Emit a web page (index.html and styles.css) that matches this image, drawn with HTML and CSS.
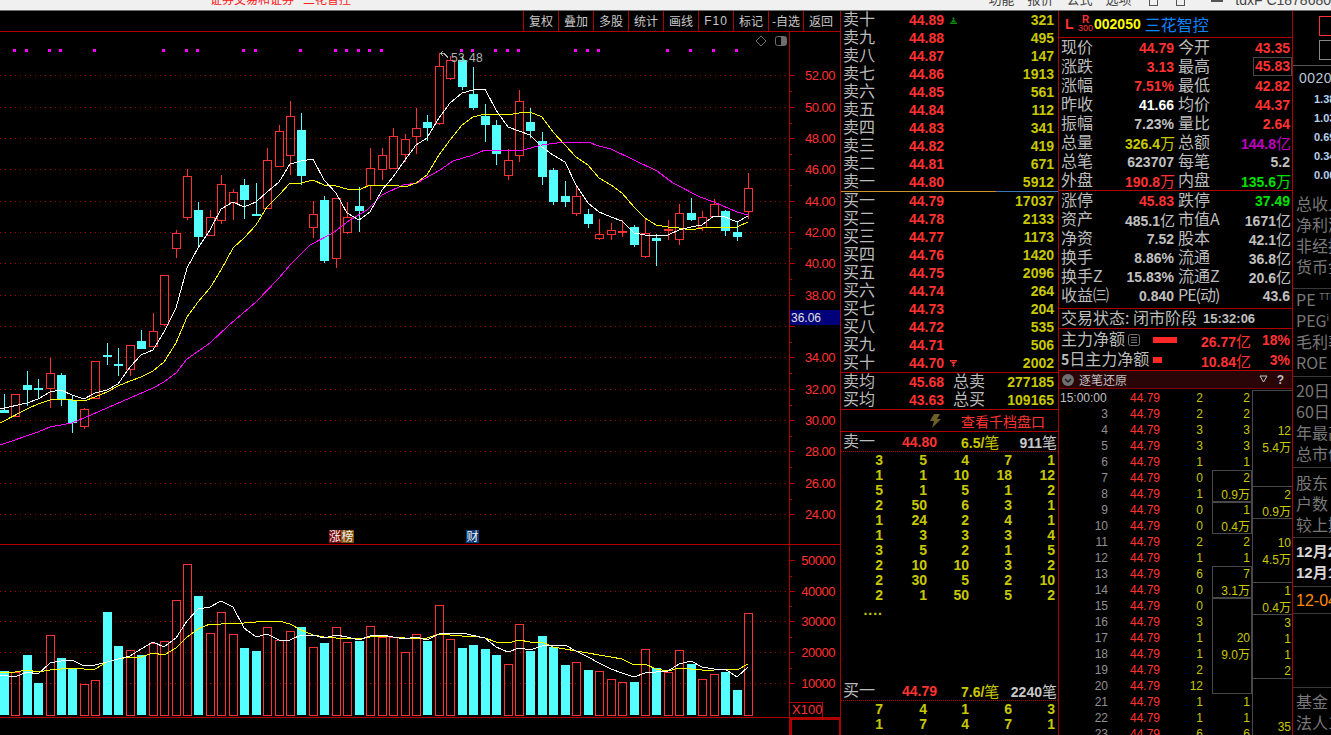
FILE: index.html
```html
<!DOCTYPE html>
<html lang="zh-CN">
<head>
<meta charset="utf-8">
<title>三花智控 002050</title>
<link rel="stylesheet" href="styles.css">
</head>
<body>
<header class="titlebar">
  <span class="title-red">证券交易和证券<span class="title-name">三花智控</span></span>
  <nav class="title-menu"><span>功能</span><span>报价</span><span>公式</span><span>选项</span></nav>
  <span class="title-icons"><i class="ti-a"></i><i class="ti-b"></i><i class="ti-c"></i></span>
  <span class="title-acct">tdxF C1878680</span>
</header>
<main class="app">
  <section class="chart-col">
    <div class="toolbar">
      <span class="tool">复权</span><span class="tool">叠加</span><span class="tool">多股</span><span class="tool">统计</span><span class="tool">画线</span><span class="tool tool-f">F10</span><span class="tool">标记</span><span class="tool">-自选</span><span class="tool">返回</span>
    </div>
    <svg id="chart" class="chart" viewBox="0 32 840 703" width="840" height="703" xmlns="http://www.w3.org/2000/svg"></svg>
  </section>

  <section class="book">
    <div class="ob-row"><span class="lb">卖十</span><b class="pr">44.89</b><svg class="arrow" viewBox="0 0 7 7"><path class="arr-g" d="M3.5 0 5 2H2zM3.5 2 6 5H1zM0 5.500h7V7H0z"/></svg><b class="vo">321</b></div>
    <div class="ob-row"><span class="lb">卖九</span><b class="pr">44.88</b><b class="vo">495</b></div>
    <div class="ob-row"><span class="lb">卖八</span><b class="pr">44.87</b><b class="vo">147</b></div>
    <div class="ob-row"><span class="lb">卖七</span><b class="pr">44.86</b><b class="vo">1913</b></div>
    <div class="ob-row"><span class="lb">卖六</span><b class="pr">44.85</b><b class="vo">561</b></div>
    <div class="ob-row"><span class="lb">卖五</span><b class="pr">44.84</b><b class="vo">112</b></div>
    <div class="ob-row"><span class="lb">卖四</span><b class="pr">44.83</b><b class="vo">341</b></div>
    <div class="ob-row"><span class="lb">卖三</span><b class="pr">44.82</b><b class="vo">419</b></div>
    <div class="ob-row"><span class="lb">卖二</span><b class="pr">44.81</b><b class="vo">671</b></div>
    <div class="ob-row"><span class="lb">卖一</span><b class="pr">44.80</b><b class="vo">5912</b></div>
    <div class="ratio"><i class="ratio-a"></i><i class="ratio-b"></i></div>
    <div class="ob-row"><span class="lb">买一</span><b class="pr">44.79</b><b class="vo">17037</b></div>
    <div class="ob-row"><span class="lb">买二</span><b class="pr">44.78</b><b class="vo">2133</b></div>
    <div class="ob-row"><span class="lb">买三</span><b class="pr">44.77</b><b class="vo">1173</b></div>
    <div class="ob-row"><span class="lb">买四</span><b class="pr">44.76</b><b class="vo">1420</b></div>
    <div class="ob-row"><span class="lb">买五</span><b class="pr">44.75</b><b class="vo">2096</b></div>
    <div class="ob-row"><span class="lb">买六</span><b class="pr">44.74</b><b class="vo">264</b></div>
    <div class="ob-row"><span class="lb">买七</span><b class="pr">44.73</b><b class="vo">204</b></div>
    <div class="ob-row"><span class="lb">买八</span><b class="pr">44.72</b><b class="vo">535</b></div>
    <div class="ob-row"><span class="lb">买九</span><b class="pr">44.71</b><b class="vo">506</b></div>
    <div class="ob-row"><span class="lb">买十</span><b class="pr">44.70</b><svg class="arrow" viewBox="0 0 7 7"><path class="arr-r" d="M0 0h7v1.500H0zM1 2h5L3.500 5zM2 5h3L3.500 7z"/></svg><b class="vo">2002</b></div>
    <div class="rule"></div>
    <div class="ob-row"><span class="lb">卖均</span><b class="pr">45.68</b><span class="lb lb-mid">总卖</span><b class="vo">277185</b></div>
    <div class="ob-row"><span class="lb">买均</span><b class="pr">43.63</b><span class="lb lb-mid">总买</span><b class="vo">109165</b></div>
    <div class="rule"></div>
    <div class="depth-link"><svg class="bolt" viewBox="0 0 12 14"><path d="M5 0h6L8 5h4L3 14l2-7H1z"/></svg><span>查看千档盘口</span></div>
    <div class="rule"></div>
    <div class="queue-head"><span class="lb">卖一</span><b class="pr q-p">44.80</b><b class="vo q-v">6.5/<span class="unit">笔</span></b><b class="q-n">911<span class="unit">笔</span></b></div>
    <div class="queue">
      <b>3</b><b>5</b><b>4</b><b>7</b><b>1</b>
      <b>1</b><b>1</b><b>10</b><b>18</b><b>12</b>
      <b>5</b><b>1</b><b>5</b><b>1</b><b>2</b>
      <b>2</b><b>50</b><b>6</b><b>3</b><b>1</b>
      <b>1</b><b>24</b><b>2</b><b>4</b><b>1</b>
      <b>1</b><b>3</b><b>3</b><b>3</b><b>4</b>
      <b>3</b><b>5</b><b>2</b><b>1</b><b>5</b>
      <b>2</b><b>10</b><b>10</b><b>3</b><b>2</b>
      <b>2</b><b>30</b><b>5</b><b>2</b><b>10</b>
      <b>2</b><b>1</b><b>50</b><b>5</b><b>2</b>
      <b class="more">....</b>
    </div>
    <div class="queue-head queue-head-b"><span class="lb">买一</span><b class="pr q-p">44.79</b><b class="vo q-v">7.6/<span class="unit">笔</span></b><b class="q-n">2240<span class="unit">笔</span></b></div>
    <div class="queue">
      <b>7</b><b>4</b><b>1</b><b>6</b><b>3</b>
      <b>1</b><b>7</b><b>4</b><b>7</b><b>1</b>
    </div>
  </section>

  <section class="stats">
    <div class="stock-head">
      <span class="mark-l">L</span>
      <span class="mark-r"><em>R</em><em>300</em></span>
      <b class="code">002050</b>
      <span class="name">三花智控</span>
    </div>
    <div class="sgrid sgrid-a">
      <span class="lb">现价</span><b class="red">44.79</b><span class="lb">今开</span><b class="red">43.35</b>
      <span class="lb">涨跌</span><b class="red">3.13</b><span class="lb">最高</span><b class="red boxed">45.83</b>
      <span class="lb">涨幅</span><b class="red">7.51%</b><span class="lb">最低</span><b class="red">42.82</b>
      <span class="lb">昨收</span><b class="white">41.66</b><span class="lb">均价</span><b class="red">44.37</b>
      <span class="lb">振幅</span><b>7.23%</b><span class="lb">量比</span><b class="red">2.64</b>
      <span class="lb">总量</span><b class="yel">326.4<span class="unit">万</span></b><span class="lb">总额</span><b class="mag">144.8<span class="unit">亿</span></b>
      <span class="lb">总笔</span><b>623707</b><span class="lb">每笔</span><b>5.2</b>
      <span class="lb">外盘</span><b class="red">190.8<span class="unit">万</span></b><span class="lb">内盘</span><b class="grn">135.6<span class="unit">万</span></b>
    </div>
    <div class="sgrid sgrid-b">
      <span class="lb">涨停</span><b class="red">45.83</b><span class="lb">跌停</span><b class="grn">37.49</b>
      <span class="lb">资产</span><b>485.1<span class="unit">亿</span></b><span class="lb">市值A</span><b>1671<span class="unit">亿</span></b>
      <span class="lb">净资</span><b>7.52</b><span class="lb">股本</span><b>42.1<span class="unit">亿</span></b>
      <span class="lb">换手</span><b>8.86%</b><span class="lb">流通</span><b>36.8<span class="unit">亿</span></b>
      <span class="lb">换手Z</span><b>15.83%</b><span class="lb">流通Z</span><b>20.6<span class="unit">亿</span></b>
      <span class="lb">收益㈢</span><b>0.840</b><span class="lb lb-tight">PE(动)</span><b>43.6</b>
    </div>
    <div class="trade-state"><span class="lb">交易状态: 闭市阶段</span><b>15:32:06</b></div>
    <div class="flow">
      <div class="flow-row"><span class="lb">主力净额</span><svg class="doc" viewBox="0 0 12 12"><rect x="0.500" y="0.500" width="11" height="11" rx="2"/><path d="M3 3.500h6M3 6h6M3 8.500h6"/></svg><i class="flow-bar flow-bar-a"></i><b class="red flow-v">26.77<span class="unit">亿</span></b><b class="red flow-p">18%</b></div>
      <div class="flow-row"><span class="lb"><b class="five">5</b>日主力净额</span><i class="flow-bar flow-bar-b"></i><b class="red flow-v">10.84<span class="unit">亿</span></b><b class="red flow-p">3%</b></div>
    </div>
    <div class="tick-head">
      <svg class="chev" viewBox="0 0 12 12"><circle cx="6" cy="6" r="6"/><path d="M3 5l3 3 3-3"/></svg>
      <span class="tick-title">逐笔还原</span>
      <svg class="filter" viewBox="0 0 9 9"><path d="M1 1h7L4.500 7z"/></svg>
      <b class="help">?</b>
    </div>
    <div class="ticks">
      <div class="tick-main">
        <span class="t">15:00:00</span><span class="p">44.79</span><span class="n">2</span>
        <span class="t">3</span><span class="p">44.79</span><span class="n">2</span>
        <span class="t">4</span><span class="p">44.79</span><span class="n">3</span>
        <span class="t">5</span><span class="p">44.79</span><span class="n">3</span>
        <span class="t">6</span><span class="p">44.79</span><span class="n">1</span>
        <span class="t">7</span><span class="p">44.79</span><span class="n">0</span>
        <span class="t">8</span><span class="p">44.79</span><span class="n">1</span>
        <span class="t">9</span><span class="p">44.79</span><span class="n">0</span>
        <span class="t">10</span><span class="p">44.79</span><span class="n">0</span>
        <span class="t">11</span><span class="p">44.79</span><span class="n">2</span>
        <span class="t">12</span><span class="p">44.79</span><span class="n">1</span>
        <span class="t">13</span><span class="p">44.79</span><span class="n">6</span>
        <span class="t">14</span><span class="p">44.79</span><span class="n">0</span>
        <span class="t">15</span><span class="p">44.79</span><span class="n">0</span>
        <span class="t">16</span><span class="p">44.79</span><span class="n">3</span>
        <span class="t">17</span><span class="p">44.79</span><span class="n">1</span>
        <span class="t">18</span><span class="p">44.79</span><span class="n">1</span>
        <span class="t">19</span><span class="p">44.79</span><span class="n">2</span>
        <span class="t">20</span><span class="p">44.79</span><span class="n">12</span>
        <span class="t">21</span><span class="p">44.79</span><span class="n">1</span>
        <span class="t">22</span><span class="p">44.79</span><span class="n">1</span>
        <span class="t">23</span><span class="p">44.79</span><span class="n">6</span>
      </div>
      <div class="stack">
        <span class="c">2</span><span class="c">2</span><span class="c">3</span><span class="c">3</span><span class="c">1</span>
        <div class="box h2"><span>2</span><span>0.9<i>万</i></span></div>
        <div class="box h2"><span>1</span><span>0.4<i>万</i></span></div>
        <span class="c">2</span><span class="c">1</span>
        <div class="box h2"><span>7</span><span>3.1<i>万</i></span></div>
        <div class="box h6"><span>20</span><span>9.0<i>万</i></span></div>
        <span class="c">1</span><span class="c">1</span><span class="c">6</span>
      </div>
      <div class="stack stack-r">
        <div class="box h6"><span>12</span><span>5.4<i>万</i></span></div>
        <div class="box h2"><span>2</span><span>0.9<i>万</i></span></div>
        <div class="box h4"><span>10</span><span>4.5<i>万</i></span></div>
        <div class="box h2"><span>1</span><span>0.4<i>万</i></span></div>
        <div class="box h4 plain"><span>3</span><span>1</span><span>1</span><span>2</span></div>
        <div class="box h7"><span>35</span><span>&nbsp;</span></div>
      </div>
    </div>
  </section>

  <aside class="side">
    <div class="side-btns"><i class="sb sb-red"></i><i class="sb sb-gray"></i></div>
    <div class="side-sec side-code">
      <div class="s-code">0020</div>
      <div class="s-num">1.38</div><div class="s-num">1.03</div><div class="s-num">0.69</div><div class="s-num">0.34</div><div class="s-num">0.00</div>
    </div>
    <div class="side-sec sec-a"><p>总收入</p><p>净利润</p><p>非经损</p><p>货币金</p></div>
    <div class="side-sec sec-b"><p>PE <sup>TTM</sup></p><p>PEG<sup>i</sup></p><p>毛利率</p><p>ROE <sup>®</sup></p></div>
    <div class="side-sec sec-c"><p>20日i</p><p>60日</p><p>年最高</p><p>总市值</p></div>
    <div class="side-sec sec-d"><p>股东</p><p>户数</p><p>较上期</p></div>
    <div class="side-sec sec-e"><p>12月2</p><p>12月1</p></div>
    <div class="side-sec sec-f"><p>12-04</p></div>
    <div class="side-sec sec-g"></div>
    <div class="side-sec sec-h"><p>基金</p><p>法人1</p></div>
  </aside>
</main>
<script src="chart.js"></script>
</body>
</html>
```
FILE: styles.css
```css
* { box-sizing: border-box; }
html, body { margin: 0; padding: 0; height: 100%; overflow: hidden; background: #000; }
body {
  width: 1331px; height: 735px;
  font-family: "Liberation Sans", "Noto Sans CJK SC", sans-serif;
  font-size: 14px; color: #c8c8c8;
}
i, em { font-style: normal; }
p { margin: 0; }

/* window title strip, cut at the top of the picture */
.titlebar {
  height: 11px; background: #f0f0f0; border-bottom: 1px solid #707070;
  display: flex; align-items: flex-start; overflow: hidden;
  font-family: "Noto Sans CJK SC", sans-serif; font-size: 14px; line-height: 14px; color: #444;
}
.title-red { margin: -8px 0 0 210px; width: 690px; color: #ff2020; white-space: nowrap; font-size: 12px; }
.title-name { margin-left: 9px; }
.title-menu { margin: -8px 0 0 100px; display: flex; gap: 13px; width: 163px; white-space: nowrap; font-size: 13px; }
.title-icons { display: flex; gap: 18px; width: 88px; }
.title-icons i { width: 9px; height: 6px; border: 1px solid #555; border-top: 0; }
.title-icons .ti-c { width: 12px; height: 2px; border-bottom-width: 2px; margin-left: 8px; }
.title-acct { margin-top: -7px; font-family: "Liberation Sans", sans-serif; font-size: 14px; white-space: nowrap; }

.app { display: flex; height: 724px; overflow: hidden; }

/* left: K-line chart */
.chart-col { width: 841px; flex: none; border-right: 1px solid #b00000; }
.toolbar {
  height: 21px; border-bottom: 1px solid #b00000;
  display: flex; justify-content: flex-end; padding-right: 2px;
}
.tool {
  width: 35px; height: 20px; border-left: 1px solid #b00000;
  font-family: "Noto Sans CJK SC", sans-serif; font-size: 12px; line-height: 20px;
  text-align: center; white-space: nowrap; color: #c8c8c8;
}
.tool-f { font-family: "Liberation Sans", sans-serif; font-size: 12px; letter-spacing: 1px; }
.chart { display: block; }
.chart text { font-family: "Liberation Sans", sans-serif; }
.ax { fill: #ff3232; font-size: 13px; letter-spacing: -0.5px; text-anchor: end; }
.ax-x { fill: #ff3232; font-size: 13px; }
.hi-bg { fill: #00007a; }
.hi-txt { fill: #e0e0e0; font-size: 12px; }
.peak { fill: #b4b4b4; font-size: 12px; letter-spacing: 0.4px; }
.peak-ln { stroke: #b4b4b4; fill: none; }
.axis { stroke: #b00000; fill: none; }
.dot { stroke: #a00000; stroke-width: 1; stroke-dasharray: 1 4; fill: none; }
.crisp { shape-rendering: crispEdges; }
.up { fill: none; stroke: #ff3232; shape-rendering: crispEdges; }
.dn { fill: #54ffff; stroke: none; shape-rendering: crispEdges; }
.wick-up { stroke: #ff3232; shape-rendering: crispEdges; }
.wick-dn { stroke: #54ffff; shape-rendering: crispEdges; }
.ma { fill: none; stroke-width: 1; shape-rendering: crispEdges; }
.ma-w { stroke: #ffffff; }
.ma-y { stroke: #ffff00; }
.ma-m { stroke: #ff00ff; }
.sig { fill: #ff00ff; shape-rendering: crispEdges; }
.ic { fill: none; stroke: #6e6e6e; }
.ic-f { fill: #6e6e6e; }
.badge-a { fill: #7a0808; }
.badge-b { fill: #80500a; }
.badge-c { fill: #0a3c78; }
.chart .badge-t { fill: #f0f0f0; font-size: 12px; font-family: "Noto Sans CJK SC", sans-serif; text-anchor: middle; }

/* shared text */
.lb { font-family: "Noto Sans CJK SC", sans-serif; font-size: 16px; line-height: 18px; color: #bcbcbc; white-space: nowrap; margin-bottom: 4px; }
.lb-tight { letter-spacing: -1px; }
.unit { font-family: "Noto Sans CJK SC", sans-serif; font-weight: 400; font-size: 15px; letter-spacing: -1px; }
.rule { height: 1px; background: #b00000; }

/* order book */
.book { width: 218px; flex: none; border-right: 1px solid #b00000; }
.ob-row { height: 18px; display: flex; align-items: center; padding: 0 4px 0 2px; }
.ob-row .lb { width: 66px; flex: none; }
.pr { width: 46px; flex: none; color: #ff3232; font-size: 14px; letter-spacing: 0; }
.vo { margin-left: auto; color: #c8c800; font-size: 14px; white-space: nowrap; }
.ob-row .lb-mid { width: auto; margin-left: -2px; }
.arrow { width: 7px; height: 7px; margin-left: -5px; }
.arr-g { fill: #0a8c0a; }
.arr-r { fill: #ff3232; }
.ratio { height: 1px; display: flex; }
.ratio-a { width: 155px; background: #c8962c; }
.ratio-b { flex: 1; background: #3c78b4; }
.depth-link { height: 21px; display: flex; align-items: center; padding-left: 88px; font-family: "Noto Sans CJK SC", sans-serif; font-size: 14px; color: #ff3232; white-space: nowrap; }
.bolt { width: 12px; height: 14px; fill: #6e5f28; margin-right: 20px; }
.queue-head { height: 20px; display: flex; align-items: center; padding: 0 2px; border-bottom: 1px dotted #b00000; white-space: nowrap; }
.queue-head .lb { width: 59px; flex: none; }
.q-p { width: 59px; flex: none; }
.q-v { margin-left: 0; flex: none; }
.q-n { margin-left: auto; color: #c8c8c8; font-size: 14px; }
.queue { display: grid; grid-template-columns: 42px 44px 42px 43px 43px; padding-top: 1px; }
.queue b { height: 15px; line-height: 15px; text-align: right; color: #c8c800; font-size: 14px; }
.queue .more { letter-spacing: 1px; height: 20px; }
.queue-head-b { margin-top: 58px; }

/* stock stats */
.stats { width: 234px; flex: none; border-right: 1px solid #b00000; }
.stock-head { height: 27px; border-bottom: 1px solid #b00000; display: flex; align-items: center; padding-left: 6px; white-space: nowrap; }
.mark-l { color: #ff3232; font-size: 14px; font-weight: 700; width: 13px; }
.mark-r { display: flex; flex-direction: column; align-items: center; color: #ff3232; font-size: 9px; line-height: 9px; width: 15px; font-weight: 400; }
.mark-r em:first-child { font-weight: 700; font-size: 10px; }
.code { color: #ffff00; font-size: 14px; margin: 0 4px 0 1px; }
.name { font-family: "Noto Sans CJK SC", sans-serif; color: #0a84ff; font-size: 16px; }
.sgrid { display: grid; grid-template-columns: 48px 65px 58px 58px; grid-auto-rows: 19px; padding-left: 2px; align-items: center; }
.sgrid .lb { font-size: 16px; }
.sgrid b { text-align: right; font-size: 14px; color: #c0c0c0; white-space: nowrap; }
.sgrid .lb:nth-child(4n+3) { padding-left: 4px; }
.sgrid-a { border-bottom: 1px solid #b00000; height: 153px; }
.sgrid-b { height: 118px; border-bottom: 1px solid #b00000; }
.red { color: #ff3232 !important; }
.white { color: #fff !important; }
.yel { color: #c8c800 !important; }
.mag { color: #c000c0 !important; }
.grn { color: #00e000 !important; }
.sgrid .boxed { justify-self: end; border: 1px solid #484848; height: 19px; line-height: 17px; padding: 0 1px 0 1px; margin-right: -2px; }
.trade-state { height: 20px; display: flex; align-items: center; gap: 6px; padding-left: 2px; border-bottom: 1px solid #b00000; }
.trade-state b { font-size: 13px; color: #c0c0c0; }
.flow { height: 42px; border-bottom: 1px solid #b00000; padding-top: 1px; }
.flow-row { height: 20px; display: flex; align-items: center; padding: 0 2px; white-space: nowrap; }
.five { font-size: 14px; }
.doc { width: 12px; height: 12px; margin-left: 3px; fill: none; stroke: #777; }
.flow-bar { display: block; height: 6px; background: #ff2828; }
.flow-bar-a { width: 24px; margin-left: 13px; }
.flow-bar-b { width: 9px; margin-left: 4px; }
.flow-v { margin-left: auto; color: #ff3232; font-size: 14px; }
.flow-p { width: 40px; text-align: right; font-size: 14px; }
.tick-head { height: 18px; background: #2a0508; border-bottom: 1px solid #700; display: flex; align-items: center; padding: 0 3px; }
.chev { width: 12px; height: 12px; }
.chev circle { fill: #707070; }
.chev path { fill: none; stroke: #1a1a1a; stroke-width: 1.500; }
.tick-title { font-family: "Noto Sans CJK SC", sans-serif; font-size: 12px; color: #c0c0c0; margin-left: 5px; }
.filter { width: 9px; height: 9px; margin-left: auto; fill: none; stroke: #c0c0c0; }
.help { color: #c0c0c0; font-size: 12px; margin: 0 5px 0 9px; }
.ticks { display: flex; height: 346px; overflow: hidden; padding-top: 1px; }
.tick-main { width: 153px; flex: none; display: grid; grid-template-columns: 48px 52px 43px; grid-auto-rows: 16px; align-content: start; font-size: 12px; line-height: 16px; padding-left: 1px; }
.t { text-align: right; color: #909090; }
.t:first-child { text-align: left; color: #c0c0c0; white-space: nowrap; }
.p { color: #ff3232; text-align: right; }
.n { color: #c8c800; text-align: right; font-size: 12px; }
.stack { width: 40px; flex: none; display: flex; flex-direction: column; font-size: 12px; line-height: 16px; color: #c8c800; text-align: right; }
.stack-r { border-left: 1px solid #484848; border-top: 1px solid #484848; }
.c { height: 16px; display: block; padding-right: 2px; flex: none; }
.box { flex: none; display: flex; flex-direction: column; justify-content: center; border: 1px solid #484848; padding-right: 1px; }
.stack-r .box { border-left: 0; border-right: 0; border-top: 0; }
.box span { height: 16px; line-height: 16px; white-space: nowrap; }
.box i { font-family: "Noto Sans CJK SC", sans-serif; font-size: 12px; }
.h2 { height: 32px; }
.h4 { height: 64px; }
.h6 { height: 96px; }
.h7 { height: 112px; }
.plain { justify-content: flex-start; }

/* cut-off right column */
.side { flex: 1; min-width: 0; overflow: hidden; font-family: "Noto Sans CJK SC", sans-serif; font-size: 16px; color: #787878; white-space: nowrap; }
.side-btns { height: 55px; padding: 5px 0 0 26px; border-bottom: 1px solid #555; display: flex; flex-direction: column; gap: 4px; }
.sb { display: block; width: 20px; height: 20px; }
.sb-red { border: 1px solid #ff3232; }
.sb-gray { border: 1px solid #888; height: 20px; }
.side-sec { border-bottom: 1px solid #383838; padding-left: 3px; }
.side-sec p { line-height: 21px; }
.side-sec sup { font-size: 9px; line-height: 0; }
.side-code { height: 127px; border-bottom: 0; font-family: "Liberation Sans", sans-serif; padding: 3px 0 0 6px; }
.s-code { font-size: 14px; letter-spacing: 0.5px; color: #b8c8d8; line-height: 18px; margin-bottom: 3px; }
.s-num { font-size: 11px; font-weight: 700; color: #b8d0e8; line-height: 19px; padding-left: 15px; }
.sec-a { height: 96px; }
.sec-b { height: 88px; }
.sec-c { height: 91px; padding-top: 3px; }
.sec-d { height: 70px; padding-top: 4px; }
.sec-e { height: 49px; padding-top: 3px; color: #d8d8d8; font-family: "Liberation Sans", "Noto Sans CJK SC", sans-serif; font-weight: 700; font-size: 15px; }
.sec-f { height: 27px; color: #ff8c00; font-family: "Liberation Sans", sans-serif; padding-top: 3px; }
.sec-g { height: 74px; }
.sec-h { border: 0; padding-top: 3px; }
```
FILE: chart.js
```js
(function () {
  var NS = 'http://www.w3.org/2000/svg';
  var svg = document.getElementById('chart');

  function add(tag, cls, attrs, text) {
    var el = document.createElementNS(NS, tag);
    if (cls) el.setAttribute('class', cls);
    for (var k in attrs) el.setAttribute(k, attrs[k]);
    if (text) el.textContent = text;
    svg.appendChild(el);
    return el;
  }
  function hline(x1, x2, y, cls) {
    add('line', cls + ' crisp', { x1: x1, x2: x2, y1: y + 0.5, y2: y + 0.5 });
  }
  function vline(x, y1, y2, cls) {
    add('line', cls, { x1: x + 0.5, x2: x + 0.5, y1: y1, y2: y2 });
  }

  /* cx, wick top, body top, body bottom, wick bottom, kind (1 up, 0 down), volume top */
  var bars = [
    [4, 394, 410, 413, 413, 0, 671], [15, 394, 394, 416, 416, 1, 672], [27, 371, 385, 390, 406, 0, 655],
    [38, 379, 388, 390, 399, 0, 683], [50, 358, 373, 388, 408, 1, 635], [61, 373, 375, 399, 406, 0, 658],
    [72, 396, 400, 423, 433, 0, 669], [84, 408, 409, 426, 429, 1, 684], [95, 361, 361, 398, 399, 1, 680],
    [107, 343, 355, 357, 365, 0, 612], [118, 348, 364, 365, 376, 0, 646], [130, 345, 345, 369, 376, 1, 650],
    [141, 330, 341, 349, 349, 0, 655], [153, 313, 331, 346, 347, 1, 643], [164, 275, 275, 324, 326, 1, 641],
    [176, 230, 233, 248, 258, 1, 600], [187, 169, 176, 217, 220, 1, 564], [198, 202, 210, 237, 248, 0, 596],
    [210, 210, 217, 235, 236, 1, 633], [221, 175, 184, 220, 224, 1, 612], [233, 189, 192, 202, 220, 1, 634],
    [244, 179, 185, 200, 219, 0, 648], [256, 183, 214, 215, 216, 0, 651], [267, 148, 160, 208, 208, 1, 627],
    [279, 125, 131, 166, 166, 1, 640], [290, 101, 116, 155, 175, 1, 631], [301, 113, 130, 176, 185, 0, 627],
    [313, 201, 214, 227, 238, 1, 647], [324, 196, 200, 261, 263, 0, 643], [336, 198, 198, 258, 268, 1, 627],
    [347, 202, 217, 232, 234, 1, 642], [359, 187, 206, 211, 232, 0, 641], [370, 148, 168, 185, 200, 1, 626],
    [382, 148, 155, 169, 180, 1, 637], [393, 128, 136, 168, 169, 1, 637], [405, 134, 139, 154, 162, 1, 652],
    [416, 108, 128, 136, 154, 1, 634], [427, 115, 122, 128, 141, 0, 641], [439, 53, 66, 123, 125, 1, 605],
    [450, 56, 60, 78, 80, 1, 639], [462, 56, 60, 87, 90, 0, 648], [473, 67, 94, 108, 110, 0, 645],
    [485, 104, 116, 125, 142, 0, 649], [496, 120, 125, 154, 165, 0, 655], [508, 149, 160, 175, 180, 1, 664],
    [519, 90, 101, 155, 162, 1, 624], [530, 108, 122, 131, 138, 0, 651], [542, 132, 141, 177, 185, 0, 636],
    [553, 168, 170, 202, 205, 0, 647], [565, 181, 196, 202, 207, 0, 665], [576, 187, 196, 213, 216, 1, 662],
    [588, 209, 214, 224, 228, 0, 670], [599, 219, 234, 238, 240, 1, 671], [611, 223, 230, 234, 240, 1, 679],
    [622, 220, 231, 232, 237, 1, 682], [634, 225, 227, 245, 247, 0, 682], [645, 219, 233, 256, 258, 1, 649],
    [656, 234, 238, 241, 266, 0, 668], [668, 220, 229, 230, 240, 1, 672], [679, 204, 213, 239, 245, 1, 650],
    [691, 198, 213, 220, 221, 0, 664], [702, 211, 217, 227, 231, 1, 679], [714, 199, 204, 216, 216, 1, 674],
    [725, 210, 211, 231, 236, 0, 672], [737, 222, 232, 237, 241, 0, 690], [748, 173, 188, 211, 219, 1, 613]
  ];

  var priceAxis = [[52, 75], [50, 107], [48, 138], [46, 169], [44, 201], [42, 232], [40, 263], [38, 295],
    [36, 326], [34, 357], [32, 389], [30, 420], [28, 451], [26, 483], [24, 514]];
  var volAxis = [[50000, 560], [40000, 591], [30000, 621], [20000, 652], [10000, 683]];

  /* grid */
  priceAxis.forEach(function (a) { hline(0, 789, a[1], 'dot'); });
  volAxis.slice(1).forEach(function (a) { hline(0, 789, a[1], 'dot'); });

  /* frame */
  vline(789, 32, 735, 'axis crisp');
  hline(0, 840, 544, 'axis');
  hline(0, 840, 717, 'axis');
  add('rect', 'axis crisp', { x: 790.5, y: 718.5, width: 49, height: 30, 'stroke-width': 2 });

  /* axis ticks and labels */
  priceAxis.forEach(function (a, i) {
    hline(789, 795, a[1], 'axis');
    if (i < priceAxis.length - 1) hline(789, 792, Math.round((a[1] + priceAxis[i + 1][1]) / 2), 'axis');
    if (a[0] !== 36) add('text', 'ax', { x: 835, y: a[1] + 5 }, a[0].toFixed(2));
  });
  volAxis.forEach(function (a, i) {
    hline(789, 795, a[1], 'axis');
    if (i < volAxis.length - 1) hline(789, 792, Math.round((a[1] + volAxis[i + 1][1]) / 2), 'axis');
    add('text', 'ax', { x: 835, y: a[1] + 5 }, String(a[0]));
  });
  add('rect', 'hi-bg', { x: 790, y: 310, width: 50, height: 15 });
  add('text', 'hi-txt', { x: 791, y: 322 }, '36.06');
  add('rect', 'axis crisp', { x: 789.5, y: 702.5, width: 33, height: 15 });
  add('text', 'ax-x', { x: 792, y: 714 }, 'X100');

  /* signal dots */
  [14, 26, 49, 60, 94, 163, 186, 197, 243, 255, 300, 335, 346, 358, 369, 381, 461, 472, 495, 507, 518,
    575, 587, 598, 667, 690, 713, 736].forEach(function (x) {
    add('rect', 'sig', { x: x - 1, y: 49, width: 3, height: 3 });
  });

  /* candles and volume bars */
  bars.forEach(function (b) {
    var x = b[0], up = b[5] === 1;
    vline(x, b[1], b[2], up ? 'wick-up' : 'wick-dn');
    vline(x, b[3], b[4], up ? 'wick-up' : 'wick-dn');
    if (up) {
      add('rect', 'up', { x: x - 3.5, y: b[2] + 0.5, width: 8, height: b[3] - b[2] });
      add('rect', 'up', { x: x - 3.5, y: b[6] + 0.5, width: 8, height: 715 - b[6] });
    } else {
      add('rect', 'dn', { x: x - 4, y: b[2], width: 9, height: Math.max(b[3] - b[2], 2) });
      add('rect', 'dn', { x: x - 4, y: b[6], width: 9, height: 715 - b[6] });
    }
  });

  /* moving averages */
  function line(cls, pts) {
    add('polyline', 'ma ' + cls, { points: pts.map(function (p) { return p[0] + ',' + p[1]; }).join(' ') });
  }
  line('ma-m', [[0, 445], [38, 432], [50, 427], [72, 423], [84, 418], [107, 408], [130, 398], [153, 388],
    [164, 382], [176, 373], [187, 359], [210, 343], [228, 326], [256, 302], [279, 278], [290, 265], [310, 245],
    [333, 233], [347, 222], [367, 210], [382, 195], [403, 185], [417, 183], [440, 170], [453, 161], [473, 155],
    [485, 150], [508, 151], [523, 150], [542, 145], [557, 143], [588, 142], [599, 146], [611, 149], [634, 160],
    [657, 171], [673, 183], [700, 197], [714, 202], [737, 212], [748, 215]]);
  line('ma-y', [[0, 423], [27, 409], [38, 404], [50, 400], [61, 399], [72, 400], [84, 401], [95, 397], [107, 392],
    [118, 386], [130, 381], [141, 377], [153, 371], [164, 362], [176, 343], [187, 317], [198, 302], [210, 288],
    [221, 270], [233, 248], [244, 238], [256, 225], [267, 207], [279, 195], [290, 183], [301, 183], [313, 180],
    [324, 185], [336, 186], [347, 189], [359, 190], [370, 185], [393, 185], [405, 187], [416, 183], [427, 175],
    [439, 155], [450, 140], [462, 125], [473, 117], [485, 114], [496, 114], [508, 115], [519, 113], [530, 112],
    [542, 117], [553, 132], [565, 145], [576, 157], [588, 165], [599, 178], [611, 185], [622, 193], [634, 207],
    [645, 218], [656, 225], [668, 227], [679, 228], [691, 230], [702, 228], [714, 227], [725, 227], [737, 227],
    [748, 222]]);
  line('ma-w', [[0, 409], [27, 403], [38, 399], [50, 392], [61, 390], [72, 395], [84, 399], [95, 393], [107, 390],
    [118, 384], [130, 367], [141, 355], [153, 350], [164, 332], [176, 308], [187, 268], [198, 248], [210, 230],
    [221, 209], [233, 202], [244, 207], [256, 202], [267, 192], [279, 182], [290, 164], [301, 161], [313, 159],
    [324, 180], [336, 193], [347, 213], [359, 220], [370, 212], [382, 190], [393, 177], [405, 160], [416, 145],
    [427, 138], [439, 118], [450, 103], [462, 93], [473, 90], [485, 89], [496, 110], [508, 127], [519, 131],
    [530, 135], [542, 147], [553, 155], [565, 162], [576, 185], [588, 203], [599, 212], [611, 217], [622, 221],
    [634, 233], [645, 235], [656, 236], [668, 235], [679, 230], [691, 227], [702, 225], [714, 216], [725, 217],
    [737, 222], [748, 216]]);
  line('ma-y', [[0, 673], [15, 672], [27, 670], [38, 672], [50, 670], [61, 669], [72, 668], [84, 669], [95, 669],
    [107, 662], [118, 659], [130, 657], [141, 657], [153, 653], [164, 655], [176, 648], [187, 637], [198, 629],
    [210, 624], [221, 624], [233, 623], [244, 623], [256, 622], [267, 621], [279, 621], [290, 624], [301, 630],
    [313, 635], [324, 637], [336, 638], [347, 638], [359, 639], [370, 637], [382, 636], [393, 637], [405, 638],
    [416, 639], [427, 638], [439, 634], [450, 635], [462, 636], [473, 636], [485, 638], [496, 642], [508, 643],
    [519, 640], [530, 642], [542, 642], [553, 647], [565, 649], [576, 651], [588, 653], [599, 655], [611, 657],
    [622, 659], [634, 665], [645, 664], [656, 669], [668, 671], [679, 668], [691, 669], [702, 670], [714, 670],
    [725, 669], [737, 670], [748, 664]]);
  line('ma-w', [[0, 675], [15, 677], [27, 672], [38, 674], [50, 663], [61, 661], [72, 660], [84, 666], [95, 665],
    [107, 662], [118, 659], [130, 656], [141, 649], [153, 642], [164, 647], [176, 638], [187, 621], [198, 609],
    [210, 607], [221, 601], [233, 607], [244, 628], [256, 637], [267, 634], [279, 640], [290, 640], [301, 635],
    [313, 635], [324, 638], [336, 635], [347, 637], [359, 640], [370, 636], [382, 635], [393, 637], [405, 639],
    [416, 637], [427, 640], [439, 634], [462, 633], [485, 638], [496, 647], [508, 652], [519, 648], [530, 650],
    [542, 646], [565, 645], [576, 651], [588, 657], [599, 663], [611, 669], [622, 673], [634, 677], [645, 673],
    [656, 672], [668, 671], [679, 664], [691, 661], [702, 667], [714, 669], [725, 669], [737, 677], [748, 667]]);

  /* peak label */
  add('path', 'peak-ln crisp', { d: 'M440 53.500h4l4 4M440 53.500l3 -2M440 53.500l3 2' });
  add('text', 'peak', { x: 451, y: 62 }, '53.48');

  /* chart corner icons */
  add('path', 'ic', { d: 'M761 36l5 5-5 5-5-5z' });
  add('rect', 'ic', { x: 775.5, y: 36.5, width: 11, height: 9, rx: 2 });
  add('rect', 'ic-f', { x: 781, y: 37, width: 5, height: 8 });

  /* event badges */
  add('rect', 'badge-a', { x: 329, y: 530, width: 12, height: 13 });
  add('rect', 'badge-b', { x: 341, y: 530, width: 13, height: 13 });
  add('text', 'badge-t', { x: 335, y: 541 }, '涨');
  add('text', 'badge-t', { x: 347.500, y: 541 }, '榜');
  add('rect', 'badge-c', { x: 466, y: 530, width: 13, height: 13 });
  add('text', 'badge-t', { x: 472.500, y: 541 }, '财');
})();
```
